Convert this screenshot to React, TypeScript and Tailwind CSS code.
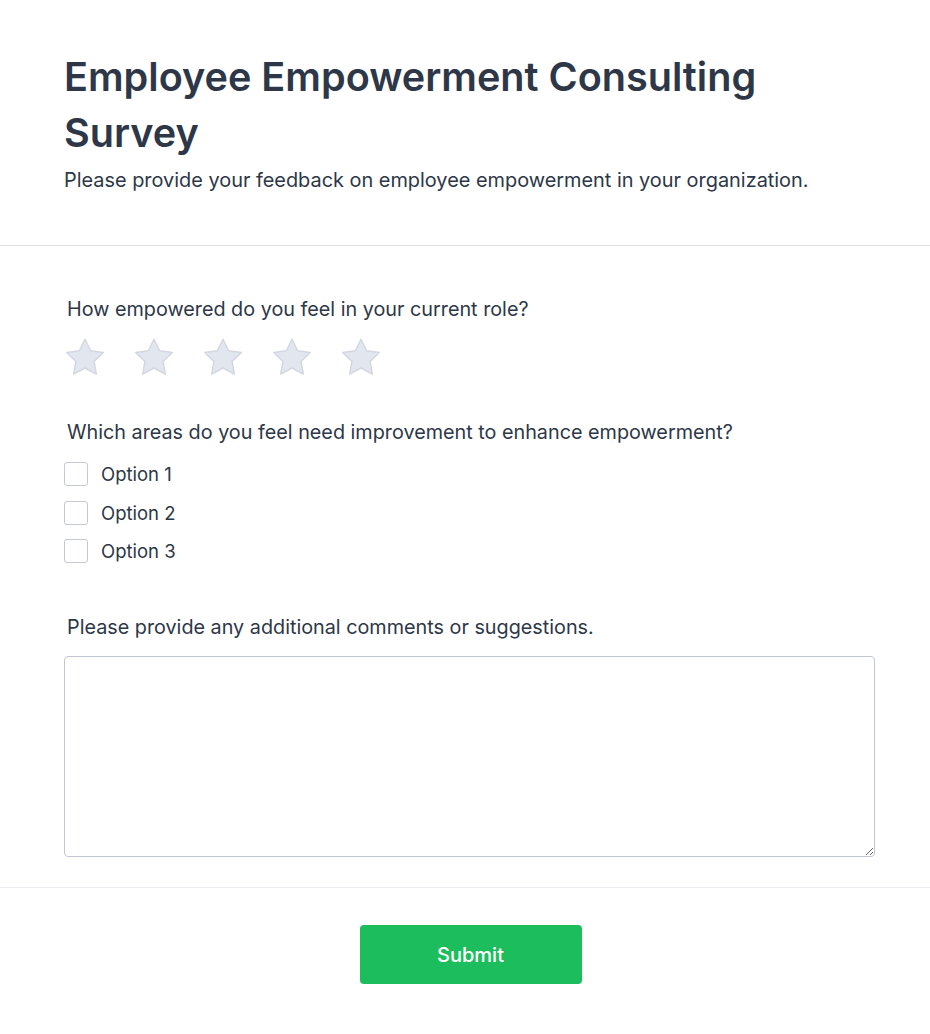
import React from "react";

function Star() {
  return (
    <svg width="44" height="44" viewBox="0 0 24 24" className="block">
      <path
        d="M12 2.3L15.06 8.59L21.99 9.56L16.95 14.41L18.17 21.29L12 18L5.83 21.29L7.05 14.41L2.01 9.56L8.94 8.59Z"
        fill="#e2e6ef"
        stroke="#d3d7e1"
        strokeWidth="0.8"
        strokeLinejoin="round"
      />
    </svg>
  );
}

export default function App() {
  return (
    <div className="min-h-screen bg-white text-[#2d3748]" style={{ fontFamily: "Inter, 'Noto Sans', sans-serif" }}>
      <div className="pl-16 pr-[55px] pt-[49px] pb-[51px]">
        <h1 className="text-[39.6px] font-semibold leading-[56px]">
          Employee Empowerment Consulting Survey
        </h1>
        <p className="text-[19.9px] leading-[28px] mt-[5px]">
          Please provide your feedback on employee empowerment in your organization.
        </p>
      </div>
      <div className="h-px bg-[#dfe1e8]" />
      <div className="pl-16 pr-[55px] pt-[49px] pb-[30px]">
        <div className="pl-[3px] text-[19.8px] leading-[28px]">How empowered do you feel in your current role?</div>
        <div className="flex gap-[25px] mt-[12px] -ml-[1px]">
          {[0, 1, 2, 3, 4].map((i) => (
            <Star key={i} />
          ))}
        </div>
        <div className="pl-[3px] text-[19.8px] leading-[28px] mt-[39px]">
          Which areas do you feel need improvement to enhance empowerment?
        </div>
        <div className="flex flex-col gap-[14.5px] mt-[16px]">
          {["Option 1", "Option 2", "Option 3"].map((o) => (
            <label key={o} className="flex items-center gap-[13px]">
              <span className="w-6 h-6 rounded-[3px] border border-[#c5c9d6] bg-white" />
              <span className="text-[18.5px] leading-[24px]">{o}</span>
            </label>
          ))}
        </div>
        <div className="pl-[3px] text-[19.8px] leading-[28px] mt-[50px]">
          Please provide any additional comments or suggestions.
        </div>
        <textarea className="block w-full h-[201px] mt-[15px] border border-[#c2c5d3] rounded-[4px] resize-y outline-none" />
      </div>
      <div className="h-px bg-[#eceef2]" />
      <div className="pl-16 pr-[55px] flex justify-center pt-[37px] pb-[50px]">
        <button className="w-[222px] h-[59px] rounded-[4px] bg-[#1bbd5c] text-white text-[20px] font-medium translate-x-[1px]">Submit</button>
      </div>
    </div>
  );
}
